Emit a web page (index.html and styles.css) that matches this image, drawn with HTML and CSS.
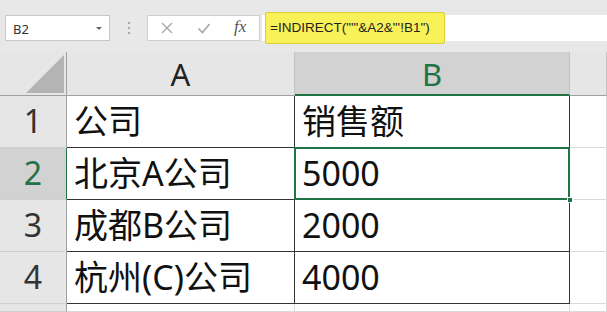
FILE: index.html
```html
<!DOCTYPE html>
<html>
<head>
<meta charset="utf-8">
<link rel="stylesheet" href="styles.css">
</head>
<body>
<div id="toolbar">
    <div class="name-box">B2<span class="drop-arrow"></span></div>
    <div class="grip"><i></i><i></i><i></i></div>
    <div class="fx-box">
        <svg class="fx-icon" width="14" height="14" viewBox="0 0 14 14"><path d="M2 2L12 12M12 2L2 12" stroke="#a6a6a6" stroke-width="1.3" fill="none"/></svg>
        <svg class="fx-icon" width="14" height="14" viewBox="0 0 14 14"><path d="M1.5 7.5L5.5 11.5L12.5 3" stroke="#a6a6a6" stroke-width="1.6" fill="none"/></svg>
        <span class="fx">fx</span>
    </div>
    <div class="formula">
        <span class="formula-mark">=INDIRECT("'"&amp;A2&amp;"'!B1")</span>
    </div>
</div>

<div id="sheet">
    <div class="corner"><span class="corner-tri"></span></div>
    <div class="col-head">A</div>
    <div class="col-head selected-head">B</div>
    <div class="col-head"></div>

    <div class="row-head">1</div>
    <div class="cell data">公司</div>
    <div class="cell data">销售额</div>
    <div class="cell"></div>

    <div class="row-head selected-row">2</div>
    <div class="cell data">北京A公司</div>
    <div class="cell data active">5000<span class="fill-handle"></span></div>
    <div class="cell"></div>

    <div class="row-head">3</div>
    <div class="cell data">成都B公司</div>
    <div class="cell data">2000</div>
    <div class="cell"></div>

    <div class="row-head">4</div>
    <div class="cell data">杭州(C)公司</div>
    <div class="cell data">4000</div>
    <div class="cell"></div>

    <div class="row-head"></div>
    <div class="cell"></div>
    <div class="cell"></div>
    <div class="cell"></div>
</div>
</body>
</html>
```

FILE: styles.css
```css
* { box-sizing: border-box; }
body { margin: 0; width: 607px; height: 312px; overflow: hidden; background: #fff; font-family: "Noto Sans", "Noto Sans CJK SC", sans-serif; }

#toolbar { height: 52px; background: #e8e8e8; display: flex; align-items: flex-start; padding: 15px 0 0 5px; }
.name-box { width: 105px; height: 26px; background: #fff; border: 1px solid #c8c8c8; font-size: 13px; color: #333; padding: 4px 0 0 7px; position: relative; }
.drop-arrow { position: absolute; right: 7px; top: 11px; border-left: 3px solid transparent; border-right: 3px solid transparent; border-top: 3px solid #666; }
.grip { width: 37px; display: flex; flex-direction: column; align-items: center; gap: 3px; padding: 7px 0 0 0; }
.grip i { width: 2px; height: 2px; background: #a8a8a8; display: block; }
.fx-box { width: 113px; height: 26px; background: #fff; border: 1px solid #d0d0d0; display: flex; align-items: center; padding: 0 0 0 12px; gap: 23px; }
.fx { font-family: "Liberation Serif", serif; font-style: italic; font-size: 17px; color: #555; margin: -3px 0 0 0; }
.formula { flex: 1; height: 26px; background: #fff; margin-left: 2px; padding-left: 3px; }
.formula-mark { display: inline-block; height: 32px; margin-top: -4px; width: 180px; background: #f8f158; border: 1.5px solid #d9cf33; border-radius: 2px; font-family: "Liberation Sans", sans-serif; font-size: 13.5px; color: #222; padding: 7px 0 0 4px; }

#sheet { display: grid; grid-template-columns: 67px 228px 275px 1fr; grid-template-rows: 44px repeat(4, 52px) 8px; }
.corner { background: #e6e6e6; border-right: 1px solid #a0a0a0; border-bottom: 1px solid #a0a0a0; display: flex; justify-content: flex-end; align-items: flex-end; padding: 0 2px 2px 0; }
.corner-tri { width: 38px; height: 38px; background: #b4b4b4; clip-path: polygon(100% 0, 100% 100%, 0 100%); }
.col-head { background: #e6e6e6; border-right: 1px solid #c4c4c4; border-bottom: 1px solid #a0a0a0; text-align: center; font-size: 31px; color: #222; line-height: 44px; }
.col-head.selected-head { background: #d2d2d2; color: #217346; border-bottom: 2px solid #217346; }
.row-head { background: #e6e6e6; border-right: 1px solid #a0a0a0; border-bottom: 1px solid #d0d0d0; text-align: center; font-size: 32px; color: #333; line-height: 50px; }
.row-head.selected-row { background: #d2d2d2; color: #217346; border-right: 1px solid #217346; }
.cell { border-right: 1px solid #dadada; border-bottom: 1px solid #dadada; font-size: 34px; color: #111; padding: 0 0 0 7px; line-height: 50px; white-space: nowrap; }
.cell.data { border-right: 1px solid #333; border-bottom: 1px solid #333; }
.cell.active { position: relative; }
.cell.active::after { content: ""; position: absolute; left: -1px; top: -1px; right: -1px; bottom: -1px; border: 2px solid #217346; }
.fill-handle { position: absolute; right: -4px; bottom: -4px; width: 6px; height: 6px; background: #217346; border: 1px solid #fff; z-index: 2; }
```
